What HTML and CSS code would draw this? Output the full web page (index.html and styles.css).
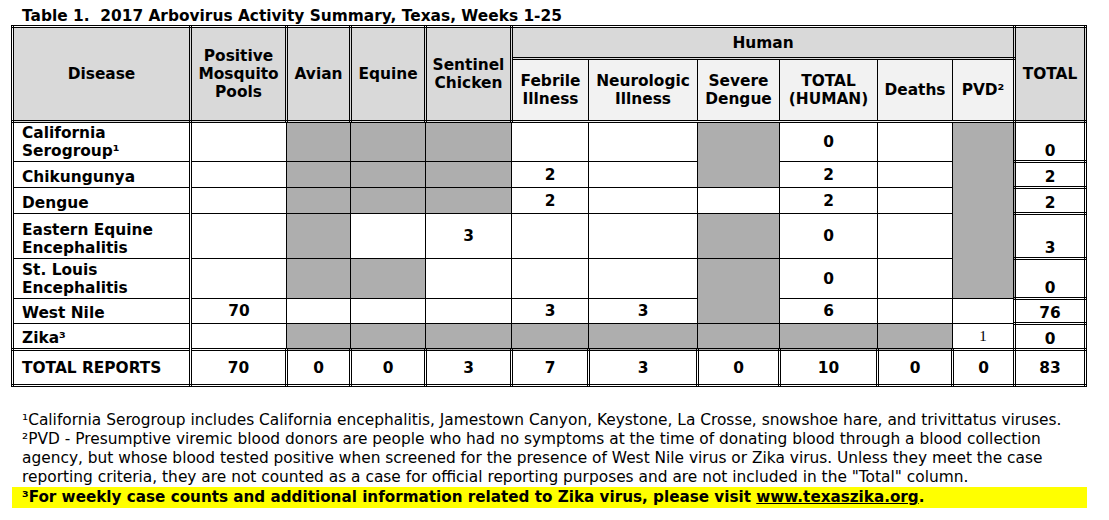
FILE: index.html
```html
<!DOCTYPE html>
<html>
<head>
<meta charset="utf-8">
<title>Table 1. 2017 Arbovirus Activity Summary</title>
<link rel="stylesheet" href="styles.css">
</head>
<body>
<div class="title">Table 1.&nbsp; 2017 Arbovirus Activity Summary, Texas, Weeks 1-25</div>
<table class="summary">
  <colgroup>
    <col class="c-disease"><col class="c-pools"><col class="c-avian"><col class="c-equine"><col class="c-chicken">
    <col class="c-febrile"><col class="c-neuro"><col class="c-severe"><col class="c-thuman"><col class="c-deaths"><col class="c-pvd"><col class="c-total">
  </colgroup>
  <thead>
    <tr class="h1">
      <th rowspan="2">Disease</th>
      <th rowspan="2">Positive<br>Mosquito<br>Pools</th>
      <th rowspan="2">Avian</th>
      <th rowspan="2">Equine</th>
      <th rowspan="2">Sentinel<br>Chicken</th>
      <th colspan="6">Human</th>
      <th rowspan="2">TOTAL</th>
    </tr>
    <tr class="h2">
      <th class="sub">Febrile<br>Illness</th>
      <th class="sub">Neurologic<br>Illness</th>
      <th class="sub">Severe<br>Dengue</th>
      <th class="sub">TOTAL<br>(HUMAN)</th>
      <th class="sub">Deaths</th>
      <th class="sub">PVD²</th>
    </tr>
  </thead>
  <tbody>
    <tr class="r-cal">
      <td class="dis">California<br>Serogroup¹</td>
      <td></td>
      <td class="sh"></td><td class="sh"></td><td class="sh"></td>
      <td></td><td></td>
      <td class="sh" rowspan="2"></td>
      <td>0</td><td></td>
      <td class="sh" rowspan="5"></td>
      <td class="tot">0</td>
    </tr>
    <tr class="r-one">
      <td class="dis">Chikungunya</td>
      <td></td>
      <td class="sh"></td><td class="sh"></td><td class="sh"></td>
      <td>2</td><td></td>
      <td>2</td><td></td>
      <td class="tot">2</td>
    </tr>
    <tr class="r-one">
      <td class="dis">Dengue</td>
      <td></td>
      <td class="sh"></td><td class="sh"></td><td class="sh"></td>
      <td>2</td><td></td><td></td>
      <td>2</td><td></td>
      <td class="tot">2</td>
    </tr>
    <tr class="r-eee">
      <td class="dis">Eastern Equine<br>Encephalitis</td>
      <td></td>
      <td class="sh"></td><td></td><td>3</td>
      <td></td><td></td><td class="sh"></td>
      <td>0</td><td></td>
      <td class="tot">3</td>
    </tr>
    <tr class="r-sle">
      <td class="dis">St. Louis<br>Encephalitis</td>
      <td></td>
      <td class="sh"></td><td class="sh"></td><td></td>
      <td></td><td></td><td class="sh" rowspan="2"></td>
      <td>0</td><td></td>
      <td class="tot">0</td>
    </tr>
    <tr class="r-wn">
      <td class="dis">West Nile</td>
      <td>70</td>
      <td></td><td></td><td></td>
      <td>3</td><td>3</td>
      <td>6</td><td></td><td></td>
      <td class="tot">76</td>
    </tr>
    <tr class="r-zika">
      <td class="dis">Zika³</td>
      <td></td>
      <td class="sh"></td><td class="sh"></td><td class="sh"></td>
      <td class="sh"></td><td class="sh"></td><td class="sh"></td>
      <td class="sh"></td><td class="sh"></td>
      <td class="plain">1</td>
      <td class="tot">0</td>
    </tr>
    <tr class="r-total">
      <td class="dis">TOTAL REPORTS</td>
      <td>70</td><td>0</td><td>0</td><td>3</td>
      <td>7</td><td>3</td><td>0</td><td>10</td><td>0</td><td>0</td>
      <td>83</td>
    </tr>
  </tbody>
</table>
<div class="notes">
  <p class="note">¹California Serogroup includes California encephalitis, Jamestown Canyon, Keystone, La Crosse, snowshoe hare, and trivittatus viruses.</p>
  <p class="note">²PVD - Presumptive viremic blood donors are people who had no symptoms at the time of donating blood through a blood collection<br>agency, but whose blood tested positive when screened for the presence of West Nile virus or Zika virus. Unless they meet the case<br>reporting criteria, they are not counted as a case for official reporting purposes and are not included in the "Total" column.</p>
  <p class="note hl">³For weekly case counts and additional information related to Zika virus, please visit <a class="link" href="#">www.texaszika.org</a>.</p>
</div>
</body>
</html>
```

FILE: styles.css
```css
html, body {
  margin: 0;
  padding: 0;
  background: #fff;
  color: #000;
  font-family: "DejaVu Sans", Verdana, sans-serif;
}

.title {
  padding: 8px 0 0 22px;
  height: 17px;
  line-height: 17px;
  font-size: 15.4px;
  font-weight: bold;
  white-space: nowrap;
}

.summary {
  margin-left: 11px;
  border-collapse: collapse;
  table-layout: fixed;
  width: 1076px;
  border: 3px double #000;
  font-size: 15.4px;
  font-weight: bold;
  line-height: 18px;
}

.c-disease { width: 178px; }
.c-pools { width: 96px; }
.c-avian { width: 64px; }
.c-equine { width: 75px; }
.c-chicken { width: 86px; }
.c-febrile { width: 77px; }
.c-neuro { width: 109px; }
.c-severe { width: 82px; }
.c-thuman { width: 98px; }
.c-deaths { width: 75px; }
.c-pvd { width: 62px; }
.c-total { width: 71px; }

.summary th {
  border: 3px double #000;
  background: #d9d9d9;
  font-weight: bold;
  text-align: center;
  vertical-align: middle;
  padding: 0 1px;
  white-space: nowrap;
}

.summary th.sub {
  background: #f2f2f2;
  border-left: 1px solid #000;
  border-right: 1px solid #000;
}

.h1 { height: 32px; }
.h2 { height: 63px; }

.summary td {
  border: 1px solid #000;
  padding: 0 2px;
  text-align: center;
  vertical-align: middle;
  white-space: nowrap;
}

.summary td.dis {
  text-align: left;
  vertical-align: bottom;
  padding: 0 0 1px 8px;
  border-right: 3px double #000;
}

.summary td.tot {
  border: 3px double #000;
  vertical-align: bottom;
  padding-bottom: 0;
}

.summary td.sh {
  background: repeating-conic-gradient(#7a7a7a 0 25%, #e2e2e2 0 50%) 0 0 / 2px 2px;
}

.summary td.plain {
  font-family: "Liberation Serif", "Times New Roman", serif;
  font-weight: normal;
  font-size: 15px;
}

.r-cal { height: 40px; }
.r-one { height: 26px; }
.r-eee { height: 45px; }
.r-sle { height: 40px; }
.r-wn { height: 25px; }
.r-zika { height: 26px; }

.summary .r-total td {
  border: 3px double #000;
  height: 33px;
  vertical-align: middle;
  padding-bottom: 0;
}

.notes {
  margin: 24px 0 0 12px;
  width: 1075px;
}

.note {
  margin: 0;
  padding-left: 10px;
  font-size: 15.4px;
  line-height: 19px;
  white-space: nowrap;
}

.note.hl {
  background: #ffff00;
  font-weight: bold;
  font-size: 15.2px;
  line-height: 21px;
}

.link {
  color: #000;
  text-decoration: underline;
}
```
